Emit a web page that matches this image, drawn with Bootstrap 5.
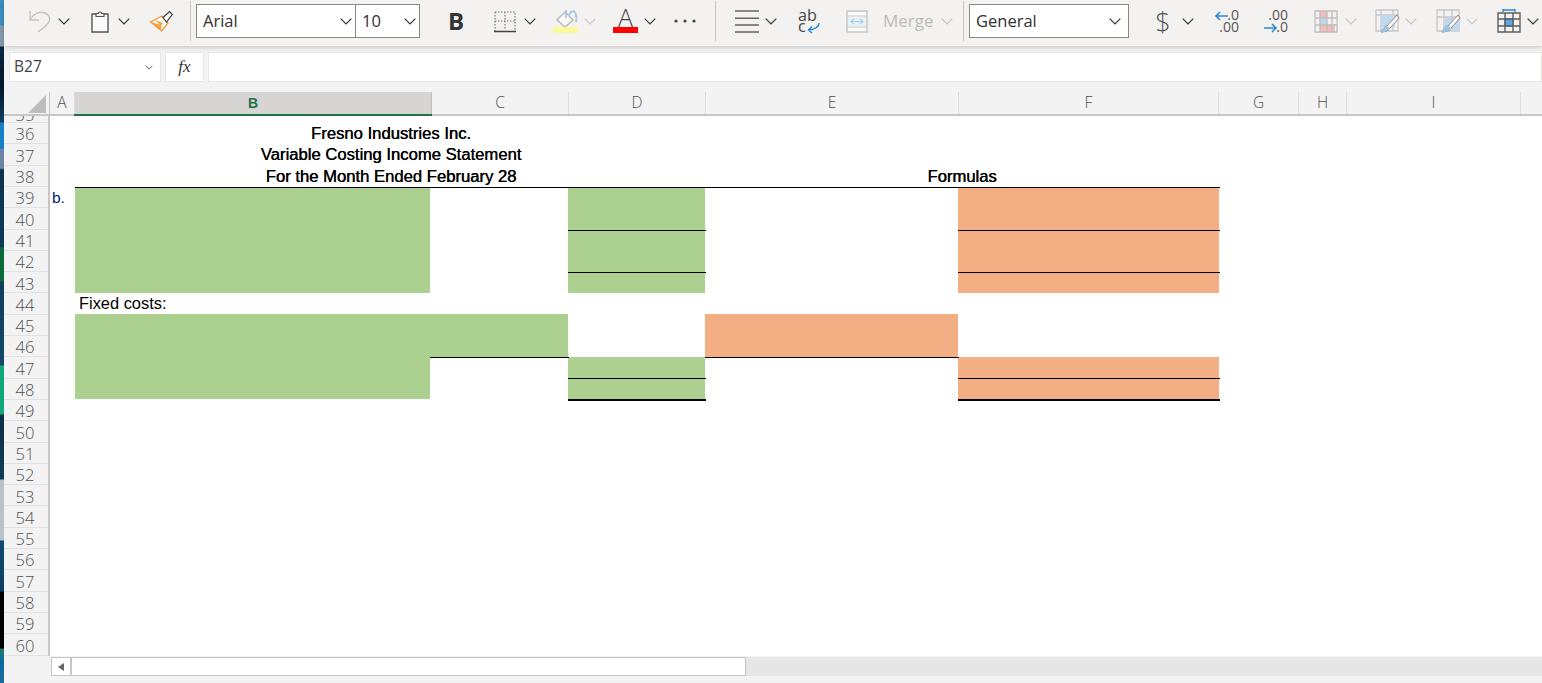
<!DOCTYPE html>
<html lang="en"><head><meta charset="utf-8"><title>Sheet</title>
<link href="https://cdn.jsdelivr.net/npm/bootstrap@5.3.0/dist/css/bootstrap.min.css" rel="stylesheet">
<style>
html,body{height:683px;overflow:hidden;background:#f3f3f3}
body{font-family:"Liberation Sans",Arial,sans-serif;color:#333}
.app{height:683px;width:1542px}
.deskstrip{width:4px;flex:none;background:linear-gradient(180deg,#3b8fc4 0,#3b8fc4 25px,#8a9bb0 26px,#8a9bb0 46px,#0a2a45 47px,#03152a 85px,#0e3e66 122px,#1780c8 123px,#1780c8 148px,#6d86a8 150px,#6d86a8 168px,#0e3350 170px,#0a3a5c 247px,#0d6b3a 248px,#0d6b3a 281px,#0d3f5e 282px,#12496b 365px,#0fa97a 366px,#0fa97a 414px,#0c2f48 415px,#103d5c 479px,#b9c2c8 480px,#b9c2c8 540px,#0e4a72 541px,#0d3f66 591px,#000 592px,#000 648px,#1a7a6a 649px,#0e6aa0 662px,#1a6c9c 683px)}
.mainpane{flex:1;min-width:0;position:relative}
.ribbon{height:46px;background:#f3f2f1;box-shadow:0 1px 5px rgba(0,0,0,.22);padding-bottom:4px;font-family:"Open Sans","Liberation Sans",sans-serif;overflow:visible;white-space:nowrap}
.rsep{width:1px;height:40px;background:#c8c6c4;flex:none}
.rbox{height:34px;border:1px solid #8a8886;background:#fff;display:flex;align-items:center;justify-content:space-between;font-size:16.5px;color:#323130;padding:0 3px 0 6px;flex:none}
.w160{width:160px}
.box10{margin-left:-1px;width:65px}
.chv{width:12px;height:7px;flex:none;display:block;color:#333}
.chv.off{color:#c8c6c4}
.chvs{width:8px;height:5px;flex:none;display:block;color:#333}
.bold-b{font-size:24px;font-weight:700;width:15px;line-height:1;color:#333;text-align:center}
.mrg{font-size:17px;color:#bdbbb9;width:50px}
.dollar{font-size:27px;width:12px;color:#555;font-weight:300;line-height:1;display:flex;justify-content:center}
.ri{flex:none;display:block;overflow:visible}
.g5{margin-left:5px}.g6{margin-left:6px}.g7{margin-left:7px}.g8{margin-left:8px}.g9{margin-left:9px}.g10{margin-left:10px}.g13{margin-left:13px}.g15{margin-left:15px}.g17{margin-left:17px}.g18{margin-left:18px}.g19{margin-left:19px}.g20{margin-left:20px}.g21{margin-left:21px}.g25{margin-left:25px}.g26{margin-left:26px}.g28{margin-left:28px}.g31{margin-left:31px}
.fbar{height:46px;padding:6px 0 0 5px;gap:4px;font-family:"Open Sans","Liberation Sans",sans-serif;background:#f3f3f3}
.fbox{height:30px;background:#fff;border:1px solid #e8e7e6;display:flex;align-items:center;flex:none}
.namebox{width:152px;padding:0 3px 0 4px;font-size:15.5px;color:#444}
.fxbox{width:39px;font-family:"Liberation Serif",serif;font-style:italic;font-size:17px;color:#333}
.colhead{height:24px;display:grid;grid-template-columns:46px 25px 357px 137px 137px 253px 260px 80px 48px 174px 1fr;border-bottom:2px solid #c6c6c6;background:#f3f3f3;font-size:15.5px;color:#505050;font-weight:300;font-family:"Open Sans","Liberation Sans",sans-serif}
.colhead>div{display:flex;align-items:center;justify-content:center;border-right:1px solid #dcdcdc;line-height:1}
.colhead>.corner{border-right:1px solid #c6c6c6;justify-content:flex-end;align-items:flex-end;padding:0 3px 1px 0}
.colhead>.colsel{background:#d6d5d3;color:#217346;font-weight:700;position:relative;font-family:"Liberation Sans",sans-serif;font-size:14px;border-right:1px solid #bdbdbd}
.colsel::after{content:"";position:absolute;left:-1px;right:-1px;bottom:-2px;height:2px;background:#217346}
.sheetwrap{height:540px;overflow:hidden}
.rowheads{width:46px;flex:none;background:#f3f3f3;border-right:2px solid #c6c6c6;font-size:16.5px;color:#505050;font-weight:300;font-family:"Open Sans","Liberation Sans",sans-serif}
.rownum{height:21.3px;display:flex;align-items:center;justify-content:center;border-bottom:1px solid #e2e2e2;line-height:1;padding:3px 2px 0 0}
.rownum.clipd{height:7.1px;align-items:flex-start;overflow:hidden;padding-top:0}
.clip35{display:block;margin-top:-9px}
.cells{flex:1;background:#fff;min-width:0;color:#000;font-size:16.4px;padding-top:7.7px}
.srow{height:21.2px;display:grid;grid-template-columns:25px 355px 138px 137px 253px 261px;line-height:21.2px;white-space:nowrap}
.ca{grid-column:1;color:#00207a;padding-left:2px;font-size:15.5px}
.cb{grid-column:2;padding-left:4px}
.ctitle{grid-column:2/span 3;text-align:center;font-size:16.65px;text-shadow:.35px 0 0 #000;padding-left:2px;line-height:20.4px}
.ctitle.bb{line-height:21.4px}
.cc{grid-column:3}.cd{grid-column:4}.ce{grid-column:5}.cf{grid-column:6}
.cef{grid-column:5/span 2;text-align:center;font-size:16.6px;text-shadow:.35px 0 0 #000}
.gfill{background:#acd08f}
.ofill{background:#f4ae83}
.bb,.bb2{position:relative}
.bb::after,.bb2::after{content:"";position:absolute;left:0;right:-1px;top:100%;height:1px;background:#000;z-index:1}
.bb2::after{height:2px}
.hscroll{height:19px;margin-left:47px;margin-top:1px;background:#e6e6e6}
.harrow{width:21px;background:#fff;border:1px solid #c6c6c6;border-right-width:2px;display:flex;align-items:center;justify-content:center}
.hthumb{width:674px;background:#fff;border:1px solid #c6c6c6;border-left:0}
</style></head><body>
<svg width="0" height="0" class="position-absolute"><defs>
<symbol id="chev" viewBox="0 0 12 7"><path d="M.7.7L6 6l5.3-5.3" fill="none" stroke="currentColor" stroke-width="1.2"/></symbol>
</defs></svg>
<div class="app d-flex">
<div class="deskstrip"></div>
<div class="mainpane d-flex flex-column">
<div class="ribbon d-flex align-items-center position-relative">
 <svg class="ri g25" width="22" height="23" viewBox="0 0 22 23" fill="none" stroke="#c4c2c0" stroke-width="1.3"><path d="M1 1v9h9M1 10C5 2 14 0 19 5c4 5 1 9-10 17"/></svg>
 <svg class="chv g7"><use href="#chev"/></svg>
 <svg class="ri g21" width="18" height="23" viewBox="0 0 18 23"><path d="M1 4h16v18H1z" fill="#fbfbfb" stroke="#555" stroke-width="1.4"/><path d="M5 6.500h8V3.500h-2.500a1.500 1.500 0 0 0-3 0H5z" fill="#f3f2f1" stroke="#555" stroke-width="1.2"/></svg>
 <svg class="chv g9"><use href="#chev"/></svg>
 <svg class="ri g20" width="23" height="21" viewBox="0 0 23 21"><path d="M.7 11L12 5l6 7-6.500 8z" fill="#fff" stroke="#ee8f2a" stroke-width="1.200"/><path d="M1 11l10 3 .500 6 z M5 9l8 3-2 3z" fill="#f5a33c"/><path d="M13 6.500L19.500.7l2.800 2.800L16.500 11z" fill="#fff" stroke="#444" stroke-width="1.200"/></svg>
 <div class="rsep g17"></div>
 <div class="rbox w160 g5"><span>Arial</span><svg class="chv"><use href="#chev"/></svg></div>
 <div class="rbox box10"><span>10</span><svg class="chv"><use href="#chev"/></svg></div>
 <span class="bold-b g28">B</span>
 <svg class="ri g31" width="22" height="23" viewBox="0 0 22 23" fill="none"><path d="M1 2h20v20M1 2v20M11 2v18M1 11h20" stroke="#777" stroke-width="1.200" stroke-dasharray="1.500 1.500"/><path d="M0 21.500h22" stroke="#444" stroke-width="1.500"/></svg>
 <svg class="chv g8"><use href="#chev"/></svg>
 <svg class="ri g17" width="26" height="24" viewBox="0 0 26 24"><path d="M4 11l8-8 8 8-8 7z" fill="#fafaf8" stroke="#bdbbb9" stroke-width="1.500"/><path d="M13 9V1M16 6c2-5 6-5 7 0 .5 2 .5 5 0 7" fill="none" stroke="#a9c9e6" stroke-width="2"/><path d="M0 18h25v6H0z" fill="#fafa9a"/></svg>
 <svg class="chv off g5"><use href="#chev"/></svg>
 <svg class="ri g17" width="25" height="24" viewBox="0 0 25 24"><text x="12.500" y="17.500" text-anchor="middle" font-family="Open Sans" font-size="25" font-weight="300" fill="#444">A</text><path d="M0 18h25v6H0z" fill="#f00"/></svg>
 <svg class="chv g6"><use href="#chev"/></svg>
 <svg class="ri g18" width="22" height="4" viewBox="0 0 22 4" fill="#444"><circle cx="2" cy="2" r="1.600"/><circle cx="11" cy="2" r="1.600"/><circle cx="20" cy="2" r="1.600"/></svg>
 <div class="rsep g19"></div>
 <svg class="ri g19" width="24" height="23" viewBox="0 0 24 23" stroke="#666" stroke-width="1.500"><path d="M0 1h24M0 8.300h24M0 15h24M0 22h24"/></svg>
 <svg class="chv g6"><use href="#chev"/></svg>
 <svg class="ri g21" width="23" height="24" viewBox="0 0 23 24"><text x="0" y="12" font-family="Open Sans" font-size="16" fill="#444">ab</text><text x="0" y="23" font-family="Open Sans" font-size="16" fill="#444">c</text><path d="M21 14c0 4-3 6-10 7m3-3.500L10.500 21l3.500 3" fill="none" stroke="#2b88d8" stroke-width="1.400"/></svg>
 <svg class="ri g25" width="22" height="23" viewBox="0 0 22 23"><path d="M1 1h20v21H1z" fill="#fbfbfa" stroke="#c8c6c4" stroke-width="1.500"/><path d="M1.500 6h19M1.500 17h19" stroke="#c8c6c4"/><path d="M2 7h18v9H2z" fill="#e6f1f8"/><path d="M5 11.500h12M8 9l-3 2.500L8 14M14 9l3 2.500L14 14" fill="none" stroke="#a3d0ec" stroke-width="1.200"/></svg>
 <span class="mrg g15">Merge</span>
 <svg class="chv off g8"><use href="#chev"/></svg>
 <div class="rsep g10"></div>
 <div class="rbox w160 g5"><span>General</span><svg class="chv me-1"><use href="#chev"/></svg></div>
 <span class="dollar g28">$</span>
 <svg class="chv g13"><use href="#chev"/></svg>
 <svg class="ri g21" width="24" height="24" viewBox="0 0 24 24"><path d="M13 7H1m4-4L1 7l4 4" fill="none" stroke="#2b88d8" stroke-width="1.600"/><text x="24" y="11" text-anchor="end" font-family="Open Sans" font-size="14" fill="#555">.0</text><text x="24" y="23" text-anchor="end" font-family="Open Sans" font-size="14" fill="#555">.00</text></svg>
 <svg class="ri g25" width="24" height="24" viewBox="0 0 24 24"><text x="24" y="11" text-anchor="end" font-family="Open Sans" font-size="14" fill="#555">.00</text><path d="M0 19h12m-4-4l4 4-4 4" fill="none" stroke="#2b88d8" stroke-width="1.600"/><text x="24" y="23" text-anchor="end" font-family="Open Sans" font-size="14" fill="#555">.0</text></svg>
 <svg class="ri g26" width="24" height="23" viewBox="0 0 24 23"><path d="M6 1h7v7H6zM6 15h15v7H6z" fill="#f6bcbc"/><path d="M6 8h7v7H6z" fill="#bcd8ee"/><path d="M1 1h22v21H1zM1 8h22M1 15h22M6 1v21M13 1v21M18 1v21" fill="none" stroke="#c0bebc" stroke-width="1.300"/></svg>
 <svg class="chv off g7"><use href="#chev"/></svg>
 <svg class="ri g18" width="24" height="24" viewBox="0 0 24 24"><path d="M1 1h22v21H1zM1 6h22M6 1v21M18 1v21" fill="none" stroke="#c8c6c4" stroke-width="1.300"/><path d="M6 6h14v12H6z" fill="#bfd9f0"/><path d="M22 6L12 17c-2 0-4 2-6 6 5 0 8-2 9-4L24 9z" fill="#fff" stroke="#8a8886"/><path d="M6 23c1-3 3-5 6-6l3 2c-1 2-4 4-9 4z" fill="#9cc4e6"/></svg>
 <svg class="chv off g6"><use href="#chev"/></svg>
 <svg class="ri g19" width="24" height="24" viewBox="0 0 24 24"><path d="M1 1h22v21H1zM1 8h22M8 1v21M16 1v21" fill="none" stroke="#c8c6c4" stroke-width="1.300"/><path d="M9 9h14v13H9z" fill="#bfd9f0"/><path d="M22 6L12 17c-2 0-4 2-6 6 5 0 8-2 9-4L24 9z" fill="#fff" stroke="#8a8886"/><path d="M6 23c1-3 3-5 6-6l3 2c-1 2-4 4-9 4z" fill="#9cc4e6"/></svg>
 <svg class="chv off g6"><use href="#chev"/></svg>
 <svg class="ri g19" width="24" height="24" viewBox="0 0 24 24"><path d="M6 1h12M6 0v3M18 0v3" fill="none" stroke="#2b88d8" stroke-width="1.400"/><path d="M8 10h8v7H8z" fill="#5aa7e4" stroke="#106ebe"/><path d="M1 4h22v19H1zM1 10h22M1 17h22M8 4v19M16 4v19" fill="none" stroke="#605e5c" stroke-width="1.400"/></svg>
 <svg class="chv g6"><use href="#chev"/></svg>
</div>
<div class="fbar d-flex">
 <div class="fbox namebox justify-content-between"><span>B27</span><svg class="chvs me-1" viewBox="0 0 12 7"><use href="#chev"/></svg></div>
 <div class="fbox fxbox justify-content-center">fx</div>
 <div class="fbox flex-fill"></div>
</div>
<div class="colhead">
 <div class="corner"><svg width="18" height="18" viewBox="0 0 19 19"><path d="M19 0v19H0z" fill="#bdbdbd"/></svg></div>
 <div>A</div><div class="colsel">B</div><div>C</div><div>D</div><div>E</div><div>F</div><div>G</div><div>H</div><div>I</div><div class="border-0"></div>
</div>
<div class="sheetwrap d-flex">
 <div class="rowheads">
  <div class="rownum clipd"><span class="clip35">35</span></div>
  <div class="rownum">36</div><div class="rownum">37</div><div class="rownum">38</div><div class="rownum">39</div><div class="rownum">40</div><div class="rownum">41</div><div class="rownum">42</div><div class="rownum">43</div><div class="rownum">44</div><div class="rownum">45</div><div class="rownum">46</div><div class="rownum">47</div><div class="rownum">48</div><div class="rownum">49</div><div class="rownum">50</div><div class="rownum">51</div><div class="rownum">52</div><div class="rownum">53</div><div class="rownum">54</div><div class="rownum">55</div><div class="rownum">56</div><div class="rownum">57</div><div class="rownum">58</div><div class="rownum">59</div><div class="rownum">60</div>
 </div>
 <div class="cells">
  <div class="srow"><div class="ctitle">Fresno Industries Inc.</div></div>
  <div class="srow"><div class="ctitle">Variable Costing Income Statement</div></div>
  <div class="srow"><div class="ctitle bb">For the Month Ended February 28</div><div class="cef bb">Formulas</div></div>
  <div class="srow"><div class="ca">b.</div><div class="cb gfill"></div><div class="cd gfill"></div><div class="cf ofill"></div></div>
  <div class="srow"><div class="cb gfill"></div><div class="cd gfill bb"></div><div class="cf ofill bb"></div></div>
  <div class="srow"><div class="cb gfill"></div><div class="cd gfill"></div><div class="cf ofill"></div></div>
  <div class="srow"><div class="cb gfill"></div><div class="cd gfill bb"></div><div class="cf ofill bb"></div></div>
  <div class="srow"><div class="cb gfill"></div><div class="cd gfill"></div><div class="cf ofill"></div></div>
  <div class="srow"><div class="cb">Fixed costs:</div></div>
  <div class="srow"><div class="cb gfill"></div><div class="cc gfill"></div><div class="ce ofill"></div></div>
  <div class="srow"><div class="cb gfill"></div><div class="cc gfill bb"></div><div class="ce ofill bb"></div></div>
  <div class="srow"><div class="cb gfill"></div><div class="cd gfill bb"></div><div class="cf ofill bb"></div></div>
  <div class="srow"><div class="cb gfill"></div><div class="cd gfill bb2"></div><div class="cf ofill bb2"></div></div>
 </div>
</div>
<div class="hscroll d-flex">
 <div class="harrow"><svg width="6" height="8" viewBox="0 0 6 8"><path d="M6 0v8L0 4z" fill="#666"/></svg></div>
 <div class="hthumb"></div>
</div>
</div></div>
<script src="https://cdn.jsdelivr.net/npm/bootstrap@5.3.0/dist/js/bootstrap.bundle.min.js"></script>
</body></html>
